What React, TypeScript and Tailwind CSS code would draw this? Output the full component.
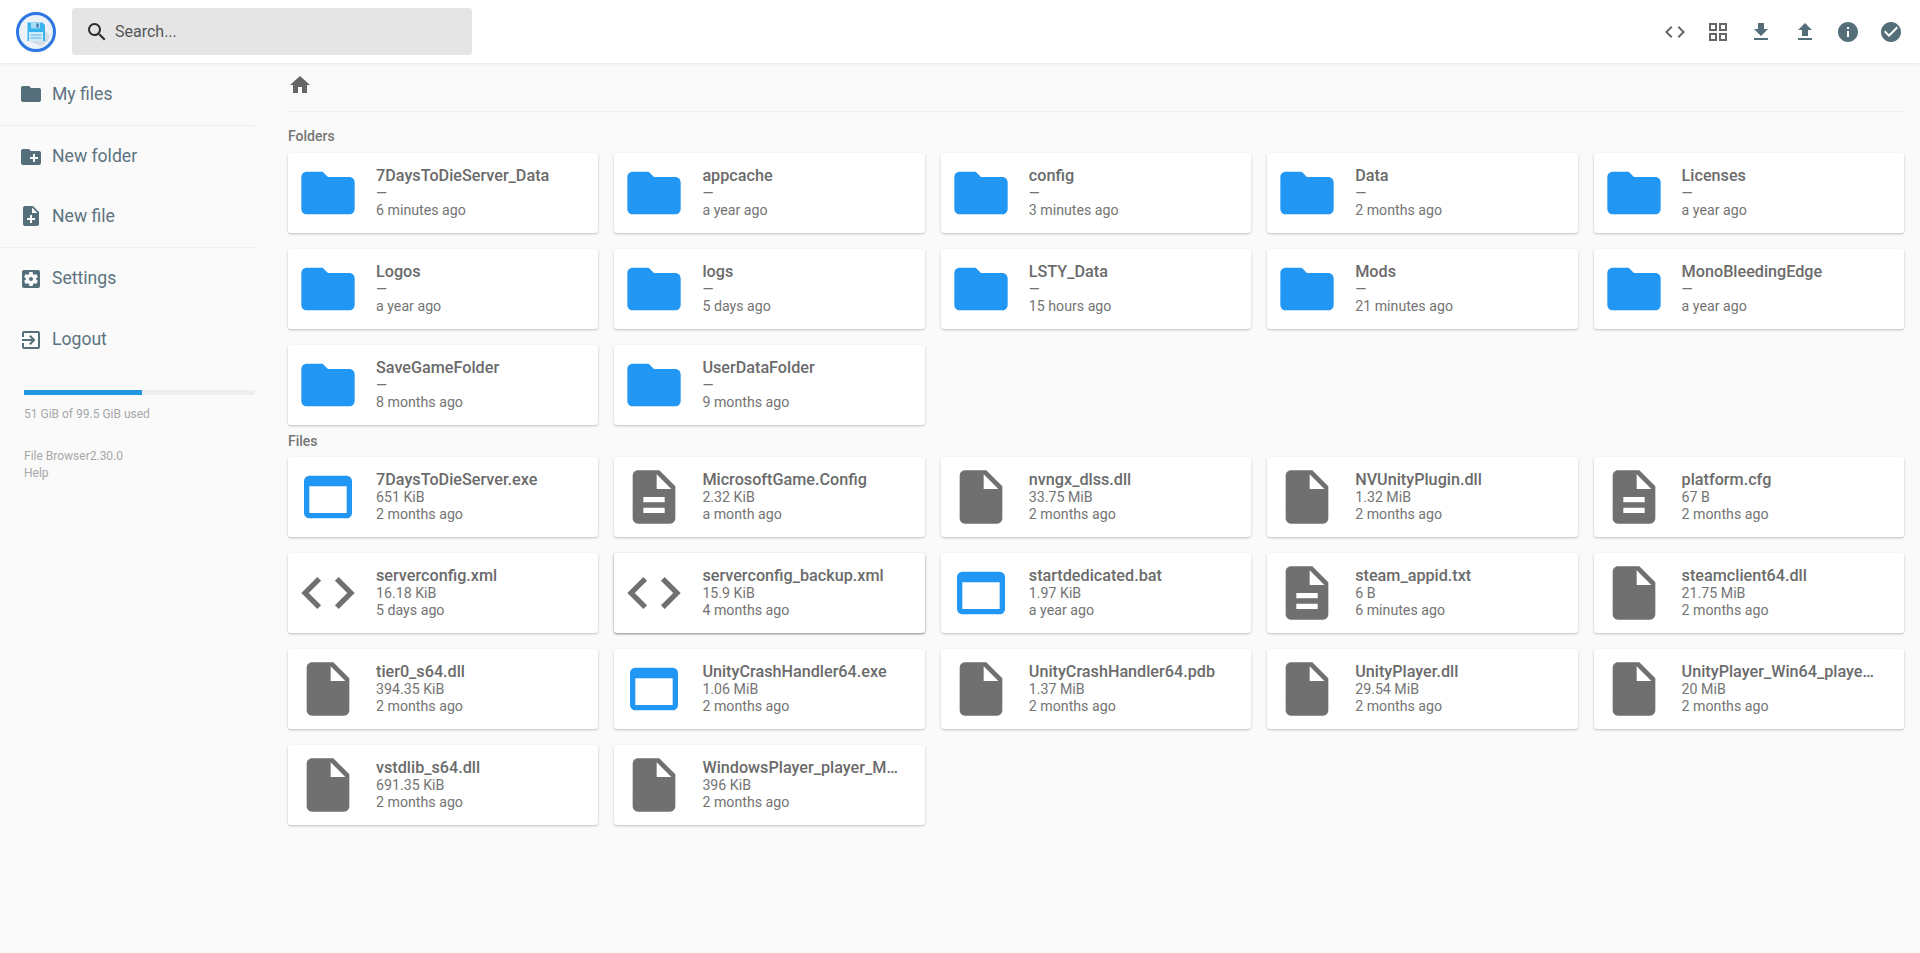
import {
  MdCheckCircle,
  MdCode,
  MdCreateNewFolder,
  MdDescription,
  MdExitToApp,
  MdFileDownload,
  MdFileUpload,
  MdFolder,
  MdGridView,
  MdHome,
  MdInfo,
  MdInsertDriveFile,
  MdNoteAdd,
  MdSearch,
  MdSettingsApplications,
  MdWebAsset,
} from "react-icons/md";

type Kind = "folder" | "exe" | "text" | "file" | "code";
type Item = { name: string; size: string; time: string; kind: Kind; hover?: boolean };

const folders: Item[] = [
  { name: "7DaysToDieServer_Data", size: "—", time: "6 minutes ago", kind: "folder" },
  { name: "appcache", size: "—", time: "a year ago", kind: "folder" },
  { name: "config", size: "—", time: "3 minutes ago", kind: "folder" },
  { name: "Data", size: "—", time: "2 months ago", kind: "folder" },
  { name: "Licenses", size: "—", time: "a year ago", kind: "folder" },
  { name: "Logos", size: "—", time: "a year ago", kind: "folder" },
  { name: "logs", size: "—", time: "5 days ago", kind: "folder" },
  { name: "LSTY_Data", size: "—", time: "15 hours ago", kind: "folder" },
  { name: "Mods", size: "—", time: "21 minutes ago", kind: "folder" },
  { name: "MonoBleedingEdge", size: "—", time: "a year ago", kind: "folder" },
  { name: "SaveGameFolder", size: "—", time: "8 months ago", kind: "folder" },
  { name: "UserDataFolder", size: "—", time: "9 months ago", kind: "folder" },
];

const files: Item[] = [
  { name: "7DaysToDieServer.exe", size: "651 KiB", time: "2 months ago", kind: "exe" },
  { name: "MicrosoftGame.Config", size: "2.32 KiB", time: "a month ago", kind: "text" },
  { name: "nvngx_dlss.dll", size: "33.75 MiB", time: "2 months ago", kind: "file" },
  { name: "NVUnityPlugin.dll", size: "1.32 MiB", time: "2 months ago", kind: "file" },
  { name: "platform.cfg", size: "67 B", time: "2 months ago", kind: "text" },
  { name: "serverconfig.xml", size: "16.18 KiB", time: "5 days ago", kind: "code" },
  { name: "serverconfig_backup.xml", size: "15.9 KiB", time: "4 months ago", kind: "code", hover: true },
  { name: "startdedicated.bat", size: "1.97 KiB", time: "a year ago", kind: "exe" },
  { name: "steam_appid.txt", size: "6 B", time: "6 minutes ago", kind: "text" },
  { name: "steamclient64.dll", size: "21.75 MiB", time: "2 months ago", kind: "file" },
  { name: "tier0_s64.dll", size: "394.35 KiB", time: "2 months ago", kind: "file" },
  { name: "UnityCrashHandler64.exe", size: "1.06 MiB", time: "2 months ago", kind: "exe" },
  { name: "UnityCrashHandler64.pdb", size: "1.37 MiB", time: "2 months ago", kind: "file" },
  { name: "UnityPlayer.dll", size: "29.54 MiB", time: "2 months ago", kind: "file" },
  { name: "UnityPlayer_Win64_player_x64_master.pdb", size: "20 MiB", time: "2 months ago", kind: "file" },
  { name: "vstdlib_s64.dll", size: "691.35 KiB", time: "2 months ago", kind: "file" },
  { name: "WindowsPlayer_player_Master_x64.pdb", size: "396 KiB", time: "2 months ago", kind: "file" },
];

function KindIcon({ kind }: { kind: Kind }) {
  if (kind === "folder") return <MdFolder size={64} className="text-[#2196f3]" />;
  if (kind === "exe") return <MdWebAsset size={64} className="text-[#2196f3]" />;
  if (kind === "text") return <MdDescription size={64} className="text-[#707070]" />;
  if (kind === "code") return <MdCode size={64} className="text-[#707070]" />;
  return <MdInsertDriveFile size={64} className="text-[#707070]" />;
}

function Card({ item }: { item: Item }) {
  return (
    <div
      className={`flex h-20 items-center rounded-[3px] bg-white pl-2 ${
        item.hover
          ? "shadow-[0_1px_3px_rgba(0,0,0,0.24),0_1px_2px_rgba(0,0,0,0.28)]"
          : "shadow-[0_1px_3px_rgba(0,0,0,0.12),0_1px_2px_rgba(0,0,0,0.12)]"
      }`}
    >
      <KindIcon kind={item.kind} />
      <div className="ml-4 min-w-0 flex-1 pr-[26px] pb-[1px] text-[14.2px] leading-[17px] text-[#747474]">
        <p className="truncate text-[16.2px] leading-[19px] font-medium text-[#6b6b6b]">{item.name}</p>
        <p>{item.size}</p>
        <p>{item.time}</p>
      </div>
    </div>
  );
}

function NavItem({ icon, label, className }: { icon: React.ReactNode; label: string; className: string }) {
  return (
    <div className={`flex items-center gap-[9px] pl-[19px] text-[17.6px] text-[#5b7380] ${className}`}>
      <span className="text-[#546e7a]">{icon}</span>
      {label}
    </div>
  );
}

function Logo() {
  return (
    <svg width="40" height="40" viewBox="0 0 40 40">
      <circle cx="20" cy="20" r="18.5" fill="#edf2f8" stroke="#2d77e0" strokeWidth="3" />
      <path d="M22 11 L34 24 A15 15 0 0 1 24 34 L12 28 Z" fill="#d3dbe5" />
      <path d="M11.5 10.5h15l2.5 2.5v16h-17.500z" fill="#38b4ee" />
      <rect x="15" y="10.5" width="9" height="6" fill="#a8dcf5" />
      <rect x="20.500" y="11.500" width="2" height="4" fill="#2f6ea5" />
      <rect x="13" y="20" width="14" height="9" fill="#cfeafa" />
      <rect x="14.500" y="22.500" width="11" height="1" fill="#5cb3e3" />
      <rect x="14.500" y="25.500" width="11" height="1" fill="#5cb3e3" />
    </svg>
  );
}

export default function App() {
  return (
    <div className="flex min-h-[953px] flex-col bg-[#fafafa] font-['Roboto',sans-serif]">
      <header className="flex h-[63px] items-center bg-white pr-[17px] pl-4 shadow-[0_1px_3px_rgba(0,0,0,0.08)]">
        <Logo />
        <div className="ml-4 flex h-[47px] w-[400px] items-center gap-[6px] rounded-[4px] bg-[#e5e5e5] pl-[13px] text-[16px] text-[#555]">
          <MdSearch size={24} className="text-[#2a2a2a]" />
          Search...
        </div>
        <div className="ml-auto flex items-center gap-[19.2px] text-[#546e7a]">
          <MdCode size={24} className="text-[#666]" />
          <MdGridView size={24} className="text-[#666]" />
          <MdFileDownload size={24} />
          <MdFileUpload size={24} />
          <MdInfo size={24} />
          <MdCheckCircle size={24} />
        </div>
      </header>

      <div className="flex flex-1">
        <aside className="w-[288px] shrink-0 pr-[33px]">
          <NavItem icon={<MdFolder size={24} />} label="My files" className="h-[62px]" />
          <div className="h-px bg-[#eeeeee]" />
          <NavItem icon={<MdCreateNewFolder size={24} />} label="New folder" className="h-[61px]" />
          <NavItem icon={<MdNoteAdd size={24} />} label="New file" className="h-[60px] pb-[2px]" />
          <div className="h-px bg-[#eeeeee]" />
          <NavItem icon={<MdSettingsApplications size={24} />} label="Settings" className="h-[61px]" />
          <NavItem icon={<MdExitToApp size={24} />} label="Logout" className="h-[61px]" />
          <div className="mt-5 ml-6 h-[5px] bg-[#eeeeee]">
            <div className="h-full w-[51%] bg-[#2196e3]" />
          </div>
          <p className="mt-[11px] ml-6 text-[12px] leading-4 text-[#a8a8a8]">51 GiB of 99.5 GiB used</p>
          <p className="mt-[26px] ml-6 text-[12px] leading-[17px] text-[#a8a8a8]">
            File Browser2.30.0
            <br />
            Help
          </p>
        </aside>

        <main className="min-w-0 flex-1 pr-4">
          <div className="flex h-[49px] items-center border-b border-[#eeeeee] pb-[5px]">
            <MdHome size={24} className="text-[#666]" />
          </div>
          <h2 className="mt-[16px] mb-[8px] text-[14px] leading-[17px] font-medium text-[#757575]">Folders</h2>
          <div className="grid grid-cols-5 gap-4">
            {folders.map((f) => (
              <Card key={f.name} item={f} />
            ))}
          </div>
          <h2 className="mt-[8px] mb-[7px] text-[14px] leading-[17px] font-medium text-[#757575]">Files</h2>
          <div className="grid grid-cols-5 gap-4">
            {files.map((f) => (
              <Card key={f.name} item={f} />
            ))}
          </div>
        </main>
      </div>
    </div>
  );
}
